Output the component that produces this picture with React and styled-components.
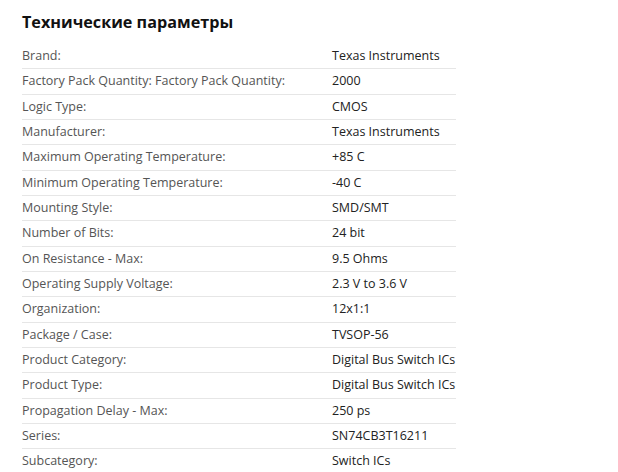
import React from 'react'
import styled, { createGlobalStyle } from 'styled-components'

const params = [
  ['Brand:', 'Texas Instruments'],
  ['Factory Pack Quantity: Factory Pack Quantity:', '2000'],
  ['Logic Type:', 'CMOS'],
  ['Manufacturer:', 'Texas Instruments'],
  ['Maximum Operating Temperature:', '+85 C'],
  ['Minimum Operating Temperature:', '-40 C'],
  ['Mounting Style:', 'SMD/SMT'],
  ['Number of Bits:', '24 bit'],
  ['On Resistance - Max:', '9.5 Ohms'],
  ['Operating Supply Voltage:', '2.3 V to 3.6 V'],
  ['Organization:', '12x1:1'],
  ['Package / Case:', 'TVSOP-56'],
  ['Product Category:', 'Digital Bus Switch ICs'],
  ['Product Type:', 'Digital Bus Switch ICs'],
  ['Propagation Delay - Max:', '250 ps'],
  ['Series:', 'SN74CB3T16211'],
  ['Subcategory:', 'Switch ICs'],
]

const App = () => (
  <Page>
    <GlobalStyle />
    <Title>Технические параметры</Title>
    <Table>
      {params.map(([label, value]) => (
        <Row key={label}>
          <Label>{label}</Label>
          <Value>{value}</Value>
        </Row>
      ))}
    </Table>
  </Page>
)

const GlobalStyle = createGlobalStyle`
  body {
    margin: 0;
    background: #fff;
    font-family: "Open Sans", "Noto Sans", sans-serif;
  }
`

const Page = styled.div`
  padding: 10px 22px 0;
  width: 434px;
`

const Title = styled.h2`
  margin: 0 0 9px;
  font-size: 16.2px;
  line-height: 25px;
  font-weight: 700;
  color: #111;
`

const Table = styled.div`
  display: flex;
  flex-direction: column;
`

const Row = styled.div`
  display: grid;
  grid-template-columns: 310px 1fr;
  padding: 3px 0;
  border-bottom: 1px solid #e6e6e6;
  font-size: 12.5px;
  line-height: 18.33px;
`

const Label = styled.span`
  color: #555;
`

const Value = styled.span`
  color: #222;
  white-space: nowrap;
`

export default App
